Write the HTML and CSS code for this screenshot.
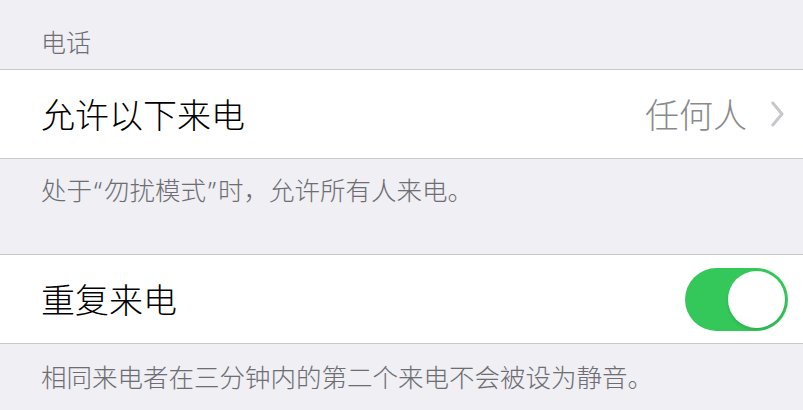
FILE: index.html
```html
<!DOCTYPE html>
<html lang="zh-CN">
<head>
<meta charset="utf-8">
<link rel="stylesheet" href="styles.css">
</head>
<body>
<div class="page">
  <div class="section-header">电话</div>
  <div class="group">
    <div class="row">
      <span class="row-label">允许以下来电</span>
      <span class="row-value">任何人</span>
      <svg class="chevron" width="13" height="26" viewBox="0 0 13 26"><path d="M1.8 2 L11 13 L1.8 24" fill="none" stroke="#c7c7cc" stroke-width="3" stroke-linecap="round" stroke-linejoin="round"/></svg>
    </div>
  </div>
  <div class="section-footer footer-first">处于<span class="quote">“</span>勿扰模式<span class="quote">”</span>时，允许所有人来电。</div>
  <div class="group">
    <div class="row">
      <span class="row-label">重复来电</span>
      <span class="toggle"><span class="knob"></span></span>
    </div>
  </div>
  <div class="section-footer footer-last">相同来电者在三分钟内的第二个来电不会被设为静音。</div>
</div>
</body>
</html>
```

FILE: styles.css
```css
html, body {
  margin: 0;
  padding: 0;
  background: #efeff4;
}
.page {
  width: 803px;
  height: 410px;
  overflow: hidden;
  background: #efeff4;
  font-family: "Noto Sans CJK SC", "Noto Sans", sans-serif;
  font-weight: 300;
}
.section-header {
  height: 30px;
  line-height: 30px;
  padding: 26px 0 13px 41px;
  font-size: 25px;
  color: #6d6d72;
}
.group {
  background: #fff;
  border-top: 1px solid #c8c7cc;
  border-bottom: 1px solid #c8c7cc;
}
.row {
  height: 88px;
  display: flex;
  align-items: center;
  padding: 0 15px 0 41px;
}
.row-label {
  flex: 1;
  font-size: 34px;
  color: #000;
  line-height: 40px;
}
.row-value {
  font-size: 34px;
  color: #8a8a8e;
  line-height: 40px;
  margin-right: 24px;
}
.chevron {
  display: block;
  margin-right: 4px;
}
.section-footer {
  font-size: 25.5px;
  line-height: 30px;
  color: #6d6d72;
  padding-left: 41px;
}
.quote {
  font-family: "Noto Sans", sans-serif;
  margin: 0 2px;
}
.footer-first {
  height: 30px;
  padding-top: 15px;
  padding-bottom: 50px;
}
.footer-last {
  padding-top: 17px;
}
.toggle {
  position: relative;
  display: block;
  width: 103px;
  height: 63px;
  border-radius: 32px;
  background: #34c759;
}
.knob {
  position: absolute;
  top: 3px;
  right: 3px;
  width: 57px;
  height: 57px;
  border-radius: 50%;
  background: #fff;
  box-shadow: 0 2px 3px rgba(0,0,0,0.12);
}
```
